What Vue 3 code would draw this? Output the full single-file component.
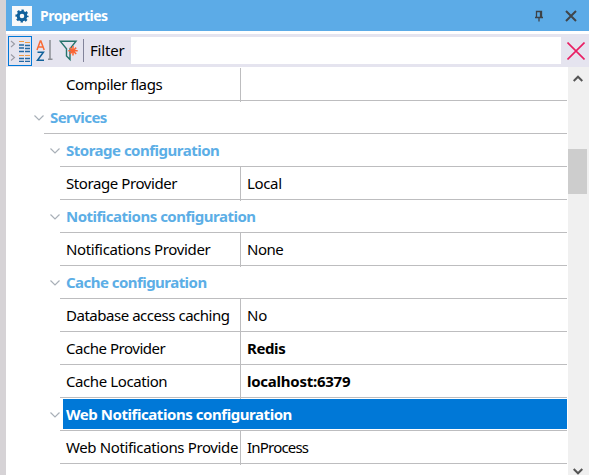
<script setup>
const rows = [
  { type: 'item', label: 'Compiler flags', value: '', ls: -0.41, vs: 0 },
  { type: 'group', level: 1, label: 'Services', ls: -0.55 },
  { type: 'group', level: 2, label: 'Storage configuration', ls: -0.5 },
  { type: 'item', label: 'Storage Provider', value: 'Local', ls: -0.42, vs: -0.35 },
  { type: 'group', level: 2, label: 'Notifications configuration', ls: -0.5 },
  { type: 'item', label: 'Notifications Provider', value: 'None', ls: -0.36, vs: -0.5 },
  { type: 'group', level: 2, label: 'Cache configuration', ls: -0.54 },
  { type: 'item', label: 'Database access caching', value: 'No', ls: -0.47, vs: -0.2 },
  { type: 'item', label: 'Cache Provider', value: 'Redis', strong: true, ls: -0.47, vs: -0.4 },
  { type: 'item', label: 'Cache Location', value: 'localhost:6379', strong: true, ls: -0.41, vs: -0.25 },
  { type: 'group', level: 2, label: 'Web Notifications configuration', selected: true, ls: -0.44 },
  { type: 'item', label: 'Web Notifications Provide', value: 'InProcess', ls: -0.37, vs: -0.8 },
]
</script>

<template>
  <div class="window">
    <header class="titlebar">
      <span class="logo">
        <svg width="20" height="20" viewBox="0 0 20 20">
          <circle cx="10" cy="10" r="3.8" fill="none" stroke="#10609c" stroke-width="3" />
          <circle cx="10" cy="10" r="5.5" fill="none" stroke="#10609c" stroke-width="2.2" stroke-dasharray="2.3 2.02" stroke-dashoffset="1.15" />
        </svg>
      </span>
      <h1>Properties</h1>
      <svg class="pin" width="10" height="12" viewBox="0 0 10 12" fill="none" stroke="#3d4248">
        <path d="M2.5 7V1.5H7.5V7M1 7.5H9M5 7.5V11.5" stroke-width="1.3" />
        <path d="M6.5 1.5V7" stroke-width="1.3" />
      </svg>
      <svg class="close" width="12" height="12" viewBox="0 0 12 12" stroke="#40454a" stroke-width="2">
        <path d="M1 1L11 11M11 1L1 11" />
      </svg>
    </header>
    <div class="toolbar">
      <span class="cat">
        <svg width="24" height="30" viewBox="0 0 24 30" fill="none">
          <path d="M3 5L6.5 8L3 11M3 18.5L6.5 21.5L3 24.5" stroke="#9a9ba5" stroke-width="1.1" />
          <path d="M11 5.5H16M17 6.5H22M11 19.5H16M17 19.5H22" stroke="#f09a45" stroke-width="1.2" />
          <path d="M11 9H16M17 9.5H22M11 12H16M17 12.5H22M11 15.5H16M17 15.5H22M11 22.5H16M17 22.5H22M11 25.3H16M17 25.3H22" stroke="#2468a3" stroke-width="1.3" />
        </svg>
      </span>
      <svg class="sort" width="18" height="22" viewBox="0 0 18 22" fill="none">
        <path d="M1 10L4.3 1H4.9L8.2 10M2.2 7H7" stroke="#f96a35" stroke-width="1.5" />
        <path d="M1.5 12.2H7.4L1.5 20.2H8" stroke="#11619b" stroke-width="1.5" />
        <path d="M14 0V20M12 19.3H16.5" stroke="#8b8d94" stroke-width="1.5" />
      </svg>
      <svg class="funnel" width="20" height="22" viewBox="0 0 20 22" fill="none">
        <path d="M1.2 1.2H17L11 8.8V19.5L7.5 16V8.8Z" stroke="#26736c" stroke-width="1.4" />
        <path d="M14 6V15.5M9.3 10.8H18.7M10.8 7.6L17.2 14M17.2 7.6L10.8 14" stroke="#fb6332" stroke-width="1.5" />
      </svg>
      <i class="divider"></i>
      <label>Filter</label>
      <input type="text" aria-label="Filter" />
      <svg class="clear" width="18" height="18" viewBox="0 0 18 18" stroke="#e91e63" stroke-width="1.6">
        <path d="M.5 .5L17.5 17.5M17.5 .5L.5 17.5" />
      </svg>
    </div>
    <main class="body">
      <div class="grid">
        <div v-for="r in rows" :key="r.label" class="row" :class="[r.type, r.level === 1 ? 'outer' : '', { selected: r.selected }]">
          <svg v-if="r.type === 'group'" class="chev" width="10" height="6" viewBox="0 0 10 6" fill="none" stroke="#a9b0b8" stroke-width="1.2">
            <path d="M.5 .5L5 5L9.5 .5" />
          </svg>
          <div class="cells">
            <span class="label"><span :style="{ letterSpacing: r.ls + 'px' }">{{ r.label }}</span></span>
            <span v-if="r.type === 'item'" class="value" :class="{ strong: r.strong }" :style="{ letterSpacing: r.vs + 'px' }">{{ r.value }}</span>
          </div>
        </div>
      </div>
      <aside class="scroll">
        <svg class="up" width="10" height="7" viewBox="0 0 10 7" fill="none" stroke="#555" stroke-width="2"><path d="M.7 6L5 1.7L9.3 6" /></svg>
        <div class="thumb"></div>
        <svg class="down" width="10" height="7" viewBox="0 0 10 7" fill="none" stroke="#555" stroke-width="2"><path d="M.7 1L5 5.3L9.3 1" /></svg>
      </aside>
    </main>
  </div>
</template>

<style>
body { margin: 0; overflow: hidden; }
</style>

<style scoped>
.window { box-sizing: border-box; width: 589px; height: 475px; border-left: 6px solid #d6d3d6; background: #fff; font: 15px "Noto Sans", sans-serif; color: #000; overflow: hidden; }
svg { display: block; flex: none; }
.titlebar { display: flex; align-items: center; height: 31px; box-sizing: border-box; padding: 0 12px 0 6px; background: #5cabe7; }
.logo { width: 20px; height: 20px; background: #f8f9fa; }
h1 { flex: 1; margin: 0 0 0 8px; font-size: 14px; line-height: 31px; font-weight: 700; color: #fff; letter-spacing: -.5px; }
.pin { margin-right: 21px; }
.toolbar { display: flex; align-items: center; height: 33px; margin-top: 3px; background: #e5e4ef; padding-right: 4px; }
.cat { box-sizing: border-box; width: 24px; height: 30px; margin-left: 2px; border: 1px solid #0078d7; }
.cat svg { margin: -1px; }
.sort { margin: 0 0 0 4px; }
.funnel { margin-left: 5px; }
.divider { width: 1px; height: 23px; margin: 0 6px 0 4px; background: #82839a; }
label { width: 41px; margin-top: -2px; letter-spacing: -.2px; white-space: nowrap; }
input { flex: 1; min-width: 0; height: 27px; padding: 0; border: 0; background: #fff; }
.clear { margin-left: 6px; }
.body { display: flex; height: 408px; }
.grid { width: 561px; padding-top: 1px; box-sizing: border-box; }
.row { display: flex; height: 33px; padding-left: 54px; }
.row.outer { padding-left: 38px; }
.chev { width: 10px; margin: 14px 0 0 -10px; }
.cells { display: flex; flex: 1; min-width: 0; box-sizing: border-box; border-bottom: 1px solid #bdbdbf; line-height: 32px; white-space: nowrap; }
.label { box-sizing: border-box; width: 180px; height: 32px; padding-left: 6px; overflow: hidden; }
.value { flex: 1; height: 34px; border-left: 1px solid #bdbdbf; padding-left: 6px; box-sizing: border-box; }
.strong { font-weight: 700; }
.group .label { flex: 1; font-weight: 700; color: #5caee6; }
.group.selected .label { height: 30px; margin: 1px 0 0 3px; padding-left: 3px; line-height: 30px; background: #0078d7; color: #fff; }
.scroll { display: flex; flex-direction: column; align-items: center; box-sizing: border-box; width: 21px; height: 100%; margin-left: auto; padding: 8px 2px 0 0; background: #f0f0f0; }
.thumb { width: 19px; height: 45px; margin-top: 67px; background: #cdcdcd; }
.down { margin-top: 274px; }
</style>
